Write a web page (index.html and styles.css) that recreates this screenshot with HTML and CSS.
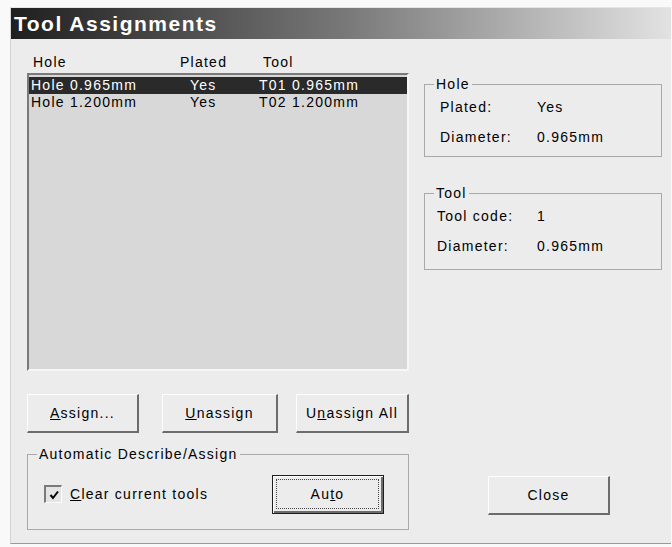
FILE: index.html
```html
<!DOCTYPE html>
<html>
<head>
<meta charset="utf-8">
<title>Tool Assignments</title>
<link rel="stylesheet" href="styles.css">
</head>
<body>
<div class="window">
  <div class="titlebar">Tool Assignments</div>
  <div class="main">
    <div class="left">
      <div class="list-head cols-head">
        <span>Hole</span><span>Plated</span><span>Tool</span>
      </div>
      <div class="list">
        <div class="row cols-row selected"><span>Hole 0.965mm</span><span>Yes</span><span>T01 0.965mm</span></div>
        <div class="row cols-row"><span>Hole 1.200mm</span><span>Yes</span><span>T02 1.200mm</span></div>
      </div>
      <div class="actions">
        <button class="btn btn-assign"><u>A</u>ssign...</button>
        <button class="btn btn-unassign"><u>U</u>nassign</button>
        <button class="btn btn-unassign-all">U<u>n</u>assign All</button>
      </div>
      <fieldset class="group auto-group">
        <legend>Automatic Describe/Assign</legend>
        <div class="auto-row">
          <label class="check">
            <span class="check-box">
              <svg width="12" height="12" viewBox="0 0 12 12"><path d="M2.5 6 L5 9 L10 2.5" fill="none" stroke="#000" stroke-width="2"/></svg>
            </span>
            <span class="check-label"><u>C</u>lear current tools</span>
          </label>
          <button class="btn btn-default"><span class="focus-ring">Au<u>t</u>o</span></button>
        </div>
      </fieldset>
    </div>
    <div class="right">
      <fieldset class="group info-group hole-group">
        <legend>Hole</legend>
        <div class="info-row"><span class="info-label">Plated:</span><span>Yes</span></div>
        <div class="info-row"><span class="info-label">Diameter:</span><span>0.965mm</span></div>
      </fieldset>
      <fieldset class="group info-group tool-group">
        <legend>Tool</legend>
        <div class="info-row"><span class="info-label">Tool code:</span><span>1</span></div>
        <div class="info-row"><span class="info-label">Diameter:</span><span>0.965mm</span></div>
      </fieldset>
      <button class="btn btn-close">Close</button>
    </div>
  </div>
</div>
</body>
</html>
```
FILE: styles.css
```css
html, body {
  margin: 0;
  padding: 0;
}

body {
  background: #f9f9f9;
  width: 672px;
  height: 547px;
  overflow: hidden;
  font-family: "Liberation Sans", Arial, sans-serif;
  font-size: 14px;
  letter-spacing: 1.25px;
  color: #000;
}

.window {
  margin: 7px 0 0 10px;
  width: 661px;
  height: 537px;
  border-left: 1px solid #d4d4d4;
  border-top: 1px solid #e6e6e6;
  border-bottom: 1px solid #9a9a9a;
  background: #ececec;
  box-sizing: border-box;
  display: flex;
  flex-direction: column;
}

.titlebar {
  height: 31px;
  line-height: 31px;
  padding-left: 3px;
  background: linear-gradient(to right, #1f1f1f 0%, #777 50%, #e2e2e2 100%);
  color: #fff;
  font-weight: bold;
  font-size: 21px;
  letter-spacing: 1.5px;
  white-space: nowrap;
}

.main {
  flex: 1;
  display: flex;
  padding: 15px 0 14px 16px;
}

.left {
  width: 382px;
  display: flex;
  flex-direction: column;
}

/* column header above the list */
.list-head {
  height: 19px;
  line-height: 17px;
  padding-left: 6px;
}

.cols-head {
  display: grid;
  grid-template-columns: 147px 83px auto;
}

.list {
  height: 298px;
  box-sizing: border-box;
  border-style: solid;
  border-width: 2px;
  border-color: #7a7a7a #f6f6f6 #f6f6f6 #7a7a7a;
  background: #d8d8d8;
  padding-top: 2px;
}

.row {
  height: 17px;
  line-height: 17px;
  padding-left: 2px;
  white-space: nowrap;
}

.cols-row {
  display: grid;
  grid-template-columns: 159px 69px auto;
}

.row.selected {
  background: #2a2a2a;
  color: #fff;
}

/* push buttons */
.btn {
  font: inherit;
  letter-spacing: inherit;
  color: #000;
  background: #ececec;
  border-style: solid;
  border-width: 1px 2px 2px 1px;
  border-color: #fdfdfd #6c6c6c #6c6c6c #fdfdfd;
  height: 39px;
  padding: 0;
  margin: 0;
  box-sizing: border-box;
  cursor: default;
}

.actions {
  display: flex;
  justify-content: space-between;
  margin-top: 23px;
}

.btn-assign { width: 112px; }
.btn-unassign { width: 116px; margin-left: 23px; }
.btn-unassign-all { width: 113px; margin-left: auto; }

/* group boxes */
.group {
  margin: 0;
  padding: 0;
  border: 1px solid #a9a9a9;
  min-width: 0;
}

.group legend {
  margin-left: 9px;
  padding: 0 2px;
  line-height: 17px;
}

.auto-group {
  margin-top: 13px;
  height: 84px;
  box-sizing: border-box;
}

.auto-row {
  display: flex;
  align-items: center;
  padding: 12px 0 0 16px;
}

.check {
  display: flex;
  align-items: center;
  gap: 8px;
  width: 228px;
  margin-top: -1px;
}

.check-box {
  width: 18px;
  height: 18px;
  box-sizing: border-box;
  border-style: solid;
  border-width: 2px 1px 1px 2px;
  border-color: #7a7a7a #fdfdfd #fdfdfd #7a7a7a;
  background: #e4e4e4;
  display: flex;
  align-items: center;
  justify-content: center;
}

.check-box svg {
  display: block;
}

.btn-default {
  width: 112px;
  border: 1px solid #1e1e1e;
  box-shadow: inset 1px 1px #fdfdfd, inset -2px -2px #6c6c6c;
  padding: 3px 4px 4px 3px;
  display: flex;
}

.focus-ring {
  flex: 1;
  border: 1px dotted #444;
  display: flex;
  align-items: center;
  justify-content: center;
}

/* right-hand info column */
.right {
  width: 238px;
  margin-left: 15px;
  display: flex;
  flex-direction: column;
}

.info-group {
  box-sizing: border-box;
}

.hole-group {
  margin-top: 22px;
  padding: 6px 0 10px 15px;
}

.hole-group legend {
  margin-left: -6px;
}

.tool-group {
  margin-top: 28px;
  padding: 6px 0 14px 12px;
}

.tool-group legend {
  margin-left: -3px;
}

.info-row {
  display: flex;
  line-height: 17px;
  white-space: nowrap;
}

.info-row + .info-row {
  margin-top: 13px;
}

.hole-group .info-label {
  width: 97px;
}

.tool-group .info-label {
  width: 100px;
}

.btn-close {
  width: 122px;
  margin: auto 0 15px 64px;
}
```
